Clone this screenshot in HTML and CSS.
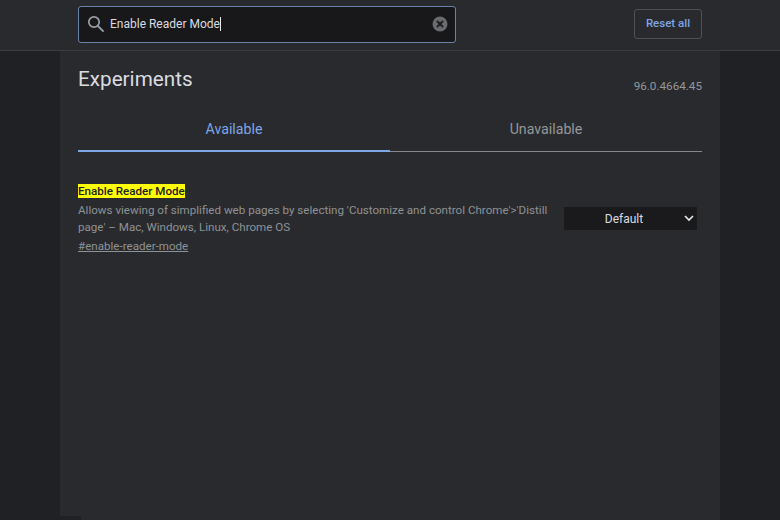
FILE: index.html
```html
<!DOCTYPE html>
<html>
<head>
    <title>Experiments</title>
    <link rel="stylesheet" href="styles.css">
</head>
<body>
    <header class="header">
        <div class="search-box">
            <svg class="search-icon" width="18" height="18" viewBox="0 0 18 18">
                <circle cx="7" cy="7" r="5.2" fill="none" stroke="#9aa0a6" stroke-width="1.7"/>
                <path d="M10.8 10.8l5.8 5.8" stroke="#9aa0a6" stroke-width="1.9" fill="none"/>
            </svg>
            <span class="search-text">Enable Reader Mode</span><span class="caret"></span>
            <svg class="clear-icon" width="16" height="16" viewBox="0 0 16 16">
                <circle cx="8" cy="8" r="7.5" fill="#6a6b6e"/>
                <path d="M5 5l6 6M11 5l-6 6" stroke="#1c1c1e" stroke-width="1.8" fill="none"/>
            </svg>
        </div>
        <button class="reset-btn">Reset all</button>
    </header>

    <main class="content">
        <div class="title-row">
            <h1>Experiments</h1>
            <span class="version">96.0.4664.45</span>
        </div>

        <div class="tabs">
            <div class="tab active">Available</div>
            <div class="tab">Unavailable</div>
        </div>

        <div class="flag">
            <div class="flag-info">
                <div class="flag-name"><mark>Enable Reader Mode</mark></div>
                <p class="flag-desc">Allows viewing of simplified web pages by selecting 'Customize and control Chrome'&gt;'Distill page' – Mac, Windows, Linux, Chrome OS</p>
                <a class="flag-link">#enable-reader-mode</a>
            </div>
            <div class="flag-select">
                <span>Default</span>
                <svg class="chevron" width="10" height="7" viewBox="0 0 10 7">
                    <path d="M1 1l4 4 4-4" stroke="#e8eaed" stroke-width="1.6" fill="none"/>
                </svg>
            </div>
        </div>
    </main>
    <div class="corner-strip"></div>
</body>
</html>
```

FILE: styles.css
```css
html, body { height: 100%; }
body {
    margin: 0;
    background-color: #202124;
    font-family: Roboto, "Liberation Sans", sans-serif;
    overflow: hidden;
}

.header {
    height: 50px;
    padding: 0 78px;
    display: flex;
    align-items: center;
    justify-content: space-between;
    background-color: #292a2d;
    border-bottom: 1px solid #3c3d40;
}
.search-box {
    width: 378px;
    height: 37px;
    box-sizing: border-box;
    margin-top: -1px;
    padding: 0 7px 0 8px;
    display: flex;
    align-items: center;
    background-color: #18181a;
    border: 1px solid #6b83ab;
    border-radius: 3px;
}
.search-icon { margin-right: 5px; margin-top: -1px; flex-shrink: 0; }
.search-text {
    margin-top: -2px;
    font-size: 12px;
    color: #dadce0;
}
.caret {
    width: 1px;
    height: 14px;
    margin-top: -1px;
    background-color: #e8eaed;
}
.clear-icon { margin-left: auto; margin-top: -1px; }
.reset-btn {
    width: 68px;
    height: 30px;
    padding: 0 0 2px;
    margin-top: -3px;
    background: none;
    border: 1px solid #4f5054;
    border-radius: 3px;
    color: #7ea6e6;
    font-family: inherit;
    font-size: 11.5px;
    font-weight: 500;
}

.content {
    width: 624px;
    height: 469px;
    margin: 0 auto;
    padding: 0 18px;
    background-color: #292a2d;
}
.title-row {
    height: 58px;
    display: flex;
    justify-content: space-between;
    align-items: flex-end;
}
h1 {
    margin: 0 0 18px;
    font-size: 20.7px;
    font-weight: 400;
    line-height: 24px;
    color: #dadce0;
}
.version {
    margin-bottom: 16px;
    font-size: 11.7px;
    line-height: 13px;
    color: #94979b;
}

.tabs { display: flex; }
.tab {
    flex: 1;
    height: 43px;
    box-sizing: border-box;
    padding-top: 12px;
    text-align: center;
    font-size: 14.2px;
    line-height: 17px;
    color: #94979b;
    border-bottom: 1px solid #85878a;
}
.tab.active {
    color: #7ea6e6;
    border-bottom: 2px solid #7ea6e6;
}

.flag {
    display: flex;
    justify-content: space-between;
    padding-top: 32px;
}
.flag-info { width: 474px; }
.flag-name {
    font-size: 11.6px;
    font-weight: 500;
    line-height: 14px;
}
mark {
    background-color: #ffff00;
    color: #202124;
}
.flag-desc {
    margin: 4px 0 0;
    font-size: 11.6px;
    line-height: 17px;
    color: #8f9296;
}
.flag-link {
    display: block;
    margin-top: 3px;
    font-size: 11.6px;
    line-height: 14px;
    color: #8f9296;
    text-decoration: underline;
}
.flag-select {
    position: relative;
    width: 133px;
    height: 23px;
    box-sizing: border-box;
    margin: 23px 5px 0 0;
    padding-right: 13px;
    background-color: #1a1a1c;
    color: #dadce0;
    font-size: 12px;
    line-height: 25px;
    text-align: center;
}
.chevron {
    position: absolute;
    right: 3px;
    top: 8px;
}
.corner-strip {
    position: absolute;
    left: 60px;
    bottom: 0;
    width: 21px;
    height: 4px;
    background-color: #202124;
}
```
